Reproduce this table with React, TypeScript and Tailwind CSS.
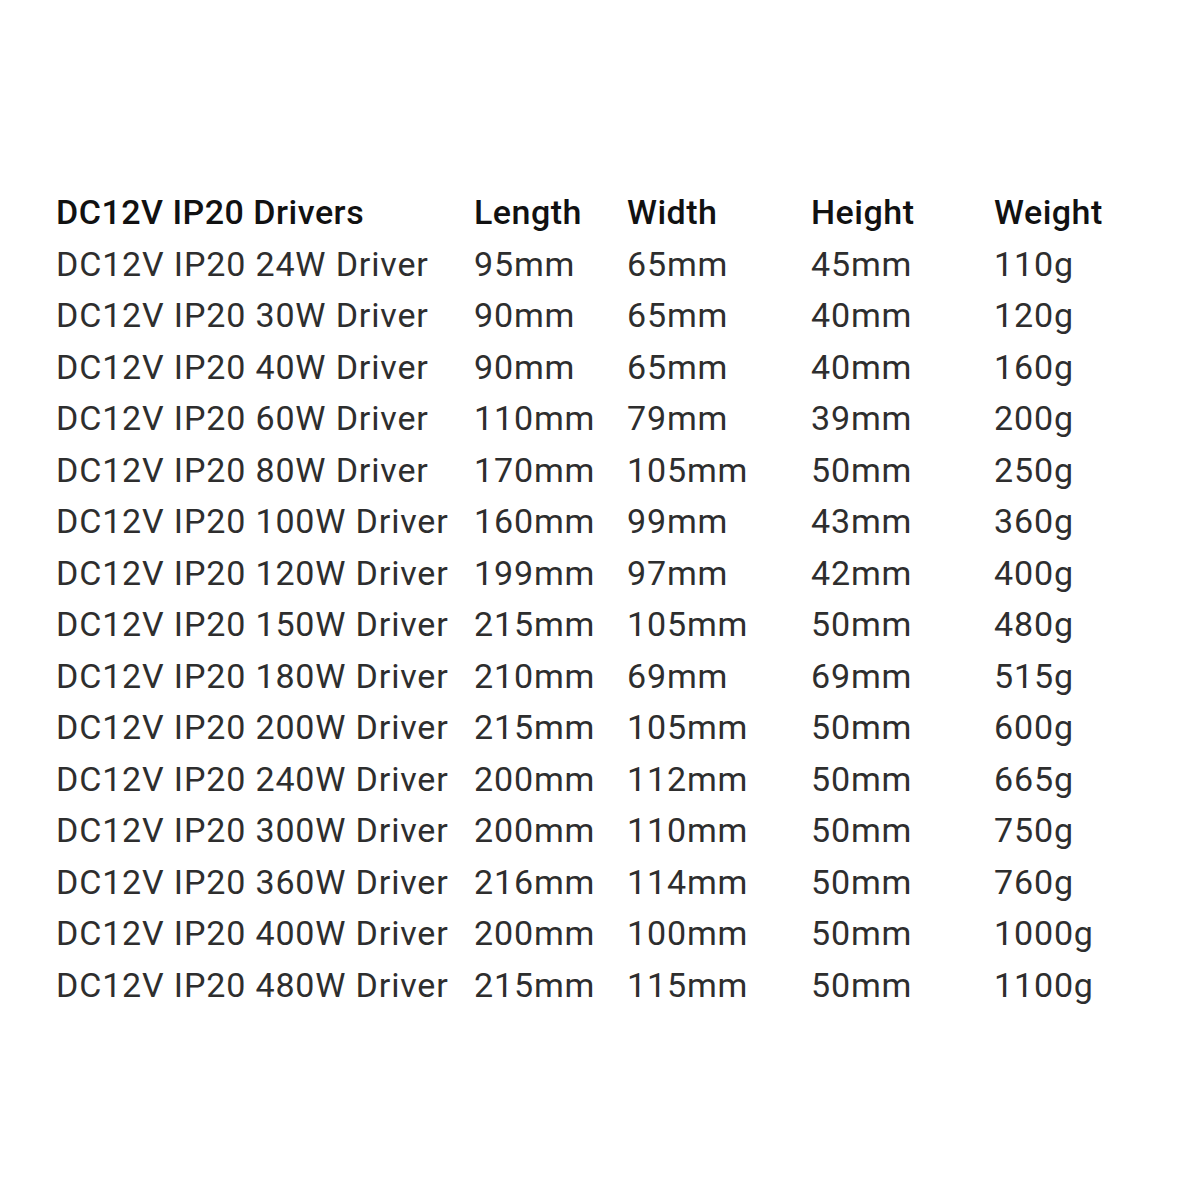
import React from 'react';

const rows: [string, string, string, string, string][] = [
  ['DC12V IP20 24W Driver', '95mm', '65mm', '45mm', '110g'],
  ['DC12V IP20 30W Driver', '90mm', '65mm', '40mm', '120g'],
  ['DC12V IP20 40W Driver', '90mm', '65mm', '40mm', '160g'],
  ['DC12V IP20 60W Driver', '110mm', '79mm', '39mm', '200g'],
  ['DC12V IP20 80W Driver', '170mm', '105mm', '50mm', '250g'],
  ['DC12V IP20 100W Driver', '160mm', '99mm', '43mm', '360g'],
  ['DC12V IP20 120W Driver', '199mm', '97mm', '42mm', '400g'],
  ['DC12V IP20 150W Driver', '215mm', '105mm', '50mm', '480g'],
  ['DC12V IP20 180W Driver', '210mm', '69mm', '69mm', '515g'],
  ['DC12V IP20 200W Driver', '215mm', '105mm', '50mm', '600g'],
  ['DC12V IP20 240W Driver', '200mm', '112mm', '50mm', '665g'],
  ['DC12V IP20 300W Driver', '200mm', '110mm', '50mm', '750g'],
  ['DC12V IP20 360W Driver', '216mm', '114mm', '50mm', '760g'],
  ['DC12V IP20 400W Driver', '200mm', '100mm', '50mm', '1000g'],
  ['DC12V IP20 480W Driver', '215mm', '115mm', '50mm', '1100g'],
];

const header = ['DC12V IP20 Drivers', 'Length', 'Width', 'Height', 'Weight'];

function App() {
  return (
    <div className="w-[1200px] h-[1200px] bg-white pt-[187px] pl-[56px] font-['Roboto',sans-serif] text-[34px] leading-[51.5px]">
      <div className="grid grid-cols-[418px_153px_184px_183px_auto]">
        {header.map((h) => (
          <div key={h} className="font-medium tracking-[0.5px] text-[#111]">
            {h}
          </div>
        ))}
        {rows.map((r) =>
          r.map((cell, i) => (
            <div key={r[0] + i} className="tracking-[0.85px] text-[#2e2e2e]">
              {cell}
            </div>
          ))
        )}
      </div>
    </div>
  );
}

export default App;
